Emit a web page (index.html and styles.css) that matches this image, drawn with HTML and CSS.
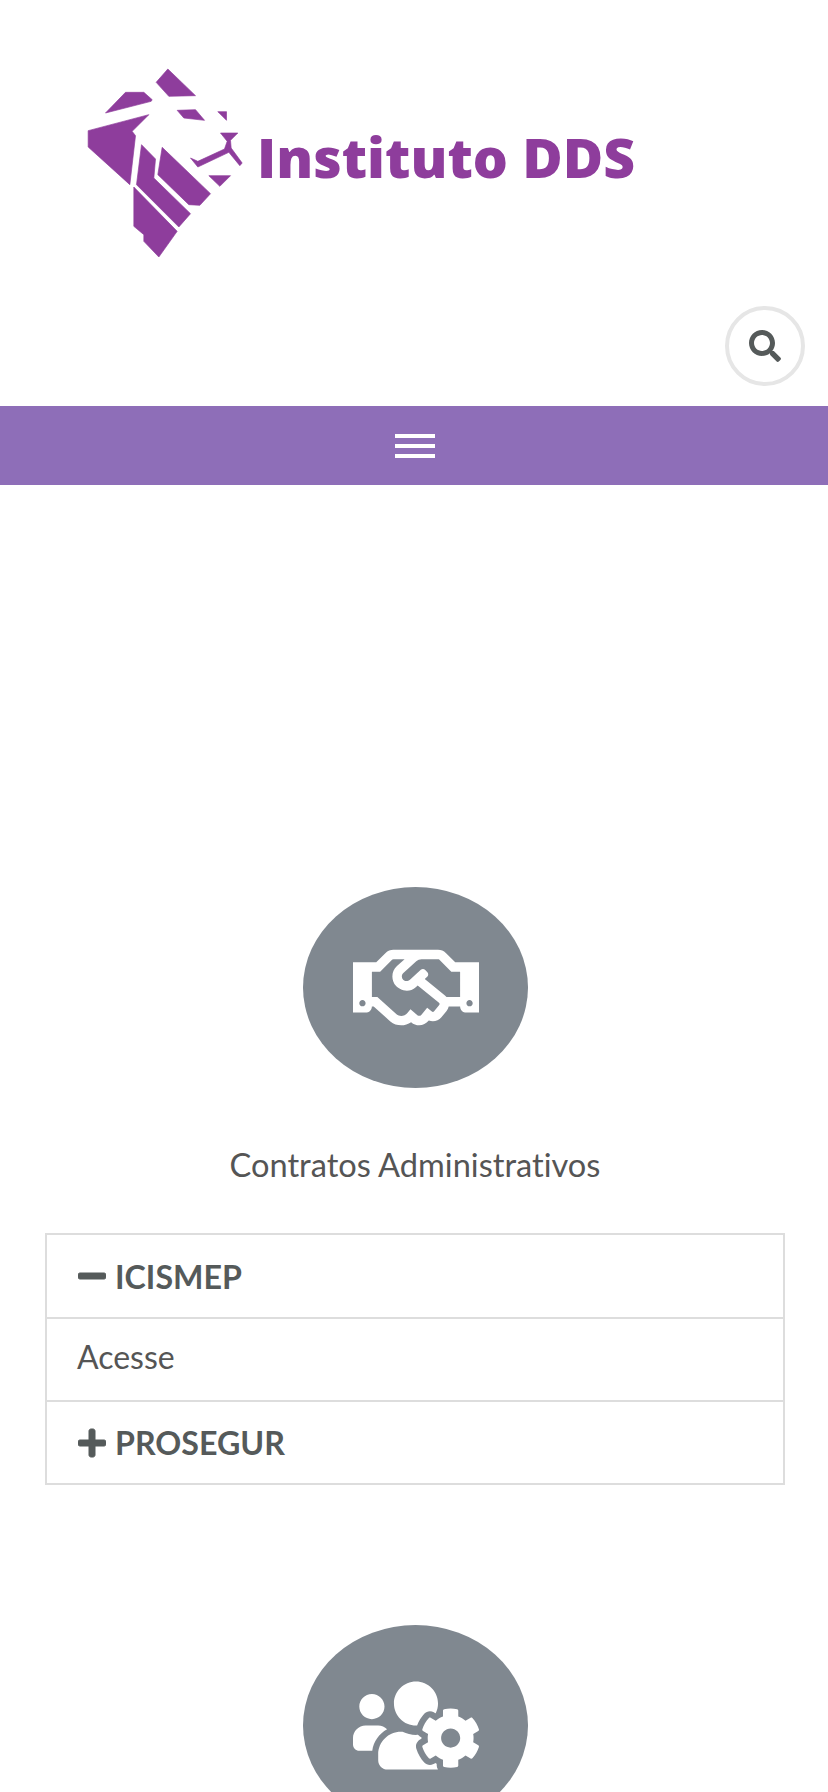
FILE: index.html
```html
<!DOCTYPE html>
<html lang="pt-br">
<head>
    <meta charset="UTF-8">
    <meta name="viewport" content="width=device-width, initial-scale=1.0">
    <title>Instituto DDS</title>
    <link rel="stylesheet" href="styles.css">
</head>
<body>
    <div class="pagina">
        <header class="topo">
            <a class="logo" href="#">
                <svg class="logo-leao" viewBox="80 55 470 570" aria-hidden="true">
                    <polygon points="322,58 405,138 325,140 287,98"/>
                    <polygon points="195,128 250,128 275,150 272,155 135,190"/>
                    <polygon points="83,243 265,195 215,245 225,258 208,405 83,292"/>
                    <polygon points="243,285 285,328 280,385 390,492 355,532 228,405"/>
                    <polygon points="305,293 450,432 418,467 385,465 292,375"/>
                    <polygon points="220,412 350,545 295,622 250,575 250,555 220,530"/>
                    <polygon points="350,182 405,180 432,212 370,205"/>
                    <polygon points="472,186 498,186 498,212"/>
                    <polygon points="480,250 532,250 510,272 512,295 545,340 538,348 505,308 412,352 390,325 412,335 492,298 500,275"/>
                    <polygon points="445,378 510,378 478,410"/>
                </svg>
                <span class="logo-texto">Instituto DDS</span>
            </a>
            <div class="busca">
                <button type="button" class="btn-busca" aria-label="Buscar">
                    <svg viewBox="0 0 512 512"><path d="M505 442.7L405.3 343c-4.5-4.5-10.6-7-17-7H372c27.6-35.3 44-79.7 44-128C416 93.1 322.9 0 208 0S0 93.1 0 208s93.1 208 208 208c48.3 0 92.7-16.4 128-44v16.3c0 6.4 2.5 12.5 7 17l99.7 99.7c9.4 9.4 24.6 9.4 33.9 0l28.3-28.3c9.4-9.4 9.4-24.6.1-34zM208 336c-70.7 0-128-57.2-128-128 0-70.7 57.2-128 128-128 70.7 0 128 57.2 128 128 0 70.7-57.2 128-128 128z"/></svg>
                </button>
            </div>
        </header>

        <nav class="menu">
            <button type="button" class="btn-menu" aria-label="Menu">
                <span></span><span></span><span></span>
            </button>
        </nav>

        <section class="bloco bloco-contratos">
            <div class="circulo">
                <svg class="icone-mao" viewBox="0 0 640 512"><path d="M519.2 127.9l-47.6-47.6A56.252 56.252 0 0 0 432 64H205.2c-14.8 0-29.1 5.9-39.6 16.3L118 127.9H0v255.7h64c17.6 0 31.8-14.2 31.9-31.7h9.1l84.6 76.4c30.9 25.1 73.8 25.7 105.6 3.8 12.5 10.8 26 15.9 41.1 15.9 18.2 0 35.3-7.4 48.8-24 22.1 8.7 48.2 2.6 64-16.8l26.2-32.3c5.6-6.9 9.1-14.8 10.9-23h57.9c.1 17.5 14.4 31.7 31.9 31.7h64V127.9H519.2zM48 351.6c-8.8 0-16-7.2-16-16s7.2-16 16-16 16 7.2 16 16c0 8.9-7.2 16-16 16zm390-6.9l-26.1 32.2c-2.8 3.4-7.8 4-11.3 1.2l-23.9-19.4-30 36.5c-6 7.3-15 4.8-18 2.4l-36.8-31.5-15.6 19.2c-13.9 17.1-39.2 19.7-55.3 6.6l-97.3-88H96V175.8h41.9l61.7-61.6c2-.8 3.7-1.5 5.7-2.3H262l-38.7 35.5c-29.4 26.9-31.1 72.3-4.4 101.3 14.8 16.2 61.2 41.2 101.5 4.4l8.2-7.5 108.2 87.8c3.4 2.8 3.9 7.9 1.2 11.3zm106-40.8h-69.2c-2.3-2.8-4.9-5.4-7.7-7.7l-102.7-83.4 12.5-11.4c6.5-6 7-16.1 1-22.6L367 167.1c-6-6.5-16.1-6.9-22.6-1l-55.2 50.6c-9.5 8.7-25.7 9.4-34.6 0-9.3-9.9-8.5-25.1 1.2-33.9l65.6-60.1c7.4-6.8 17-10.5 27-10.5l83.7-.2c2.1 0 4.1.8 5.5 2.3l61.7 61.6H544v128zm48 47.7c-8.8 0-16-7.2-16-16s7.2-16 16-16 16 7.2 16 16c0 8.9-7.2 16-16 16z"/></svg>
            </div>
            <h2 class="titulo">Contratos Administrativos</h2>
            <div class="lista">
                <div class="linha forte">
                    <svg class="sinal" viewBox="0 0 448 512"><path d="M416 208H32c-17.67 0-32 14.33-32 32v32c0 17.67 14.33 32 32 32h384c17.67 0 32-14.33 32-32v-32c0-17.67-14.33-32-32-32z"/></svg>
                    ICISMEP
                </div>
                <div class="linha linha-acesse">Acesse</div>
                <div class="linha forte">
                    <svg class="sinal" viewBox="0 0 448 512"><path d="M416 208H272V64c0-17.67-14.33-32-32-32h-32c-17.67 0-32 14.33-32 32v144H32c-17.67 0-32 14.33-32 32v32c0 17.67 14.33 32 32 32h144v144c0 17.67 14.33 32 32 32h32c17.67 0 32-14.33 32-32V304h144c17.67 0 32-14.33 32-32v-32c0-17.67-14.33-32-32-32z"/></svg>
                    PROSEGUR
                </div>
            </div>
        </section>

        <section class="bloco bloco-gestao">
            <div class="circulo">
                <svg class="icone-gestao" viewBox="0 0 640 512"><path d="M610.5 341.3c2.6-14.1 2.6-28.5 0-42.6l25.8-14.9c3-1.7 4.3-5.2 3.3-8.5-6.7-21.6-18.2-41.2-33.2-57.4-2.3-2.5-6-3.1-9-1.4l-25.8 14.9c-10.9-9.3-23.4-16.5-36.9-21.3v-29.8c0-3.4-2.4-6.4-5.7-7.1-22.3-5-45-4.8-66.2 0-3.3.7-5.7 3.7-5.7 7.1v29.8c-13.5 4.8-26 12-36.9 21.3l-25.8-14.9c-2.9-1.7-6.7-1.1-9 1.4-15 16.2-26.5 35.8-33.2 57.4-1 3.3.4 6.8 3.3 8.5l25.8 14.9c-2.6 14.1-2.6 28.5 0 42.6l-25.8 14.9c-3 1.7-4.3 5.2-3.3 8.5 6.7 21.6 18.2 41.1 33.2 57.4 2.3 2.5 6 3.1 9 1.4l25.8-14.9c10.9 9.3 23.4 16.5 36.9 21.3v29.8c0 3.4 2.4 6.4 5.7 7.1 22.3 5 45 4.8 66.2 0 3.3-.7 5.7-3.7 5.7-7.1v-29.8c13.5-4.8 26-12 36.9-21.3l25.8 14.9c2.9 1.7 6.7 1.1 9-1.4 15-16.2 26.5-35.8 33.2-57.4 1-3.3-.4-6.8-3.3-8.5l-25.8-14.9zM496 368.5c-26.8 0-48.5-21.8-48.5-48.5s21.8-48.5 48.5-48.5 48.5 21.8 48.5 48.5-21.7 48.5-48.5 48.5zM96 224c35.3 0 64-28.7 64-64s-28.7-64-64-64-64 28.7-64 64 28.7 64 64 64zm224 32c1.9 0 3.7-.5 5.6-.6 8.3-21.7 20.5-42.1 36.3-59.2 7.4-8 17.9-12.6 28.9-12.6 6.9 0 13.7 1.8 19.6 5.3l7.9 4.6c.8-.5 1.6-.9 2.4-1.4 7-14.6 11.2-30.8 11.2-48 0-61.9-50.1-112-112-112S208 82.1 208 144c0 61.9 50.1 112 112 112zm105.2 194.5c-2.3-1.2-4.6-2.6-6.8-3.9-8.2 4.8-15.3 9.8-27.5 9.8-10.9 0-21.4-4.6-28.9-12.6-18.3-19.8-32.3-43.9-40.2-69.6-10.7-34.5 24.9-49.7 25.8-50.3-.1-2.6-.1-5.2 0-7.8l-7.9-4.6c-3.8-2.2-7-5-9.8-8.1-3.3.2-6.5.6-9.8.6-24.6 0-47.6-6-68.5-16h-8.3C179.6 288 128 339.6 128 403.2V432c0 26.5 21.5 48 48 48h255.4c-3.7-6-6.2-12.8-6.2-20.3v-9.2zM173.1 274.6C161.5 263.1 145.6 256 128 256H64c-35.3 0-64 28.7-64 64v32c0 17.7 14.3 32 32 32h65.9c6.3-47.4 34.9-87.3 75.2-109.4z"/></svg>
            </div>
        </section>
    </div>
</body>
</html>
```

FILE: styles.css
```css
html, body {
    margin: 0;
    padding: 0;
    background: #fff;
}
.pagina {
    height: 1792px;
    overflow: hidden;
    font-family: Lato, Arial, sans-serif;
    color: #555;
}
.topo {
    padding-top: 68px;
}
.logo {
    display: flex;
    align-items: flex-start;
    gap: 13px;
    padding-left: 87px;
    text-decoration: none;
}
.logo-leao {
    width: 157px;
    height: 190px;
    fill: #8e3d9c;
    stroke: #8e3d9c;
    stroke-width: 2;
}
.logo-texto {
    margin-top: 52px;
    font-family: "Open Sans", Arial, sans-serif;
    font-weight: 800;
    font-size: 55.2px;
    line-height: 74px;
    color: #8e3d9c;
    white-space: nowrap;
}
.busca {
    display: flex;
    justify-content: flex-end;
    padding: 48px 23px 20px 0;
}
.btn-busca {
    display: flex;
    align-items: center;
    justify-content: center;
    width: 80px;
    height: 80px;
    padding: 0;
    border: 4px solid #e6e6e6;
    border-radius: 50%;
    background: #fff;
}
.btn-busca svg {
    width: 32px;
    height: 32px;
    fill: #555a5a;
}
.menu {
    display: flex;
    justify-content: center;
    align-items: center;
    height: 79px;
    padding-left: 2px;
    background: #8e6eb8;
}
.btn-menu {
    display: flex;
    flex-direction: column;
    gap: 6px;
    width: 40px;
    padding: 0;
    border: none;
    background: none;
}
.btn-menu span {
    height: 4px;
    background: #fff;
}
.bloco {
    display: flex;
    flex-direction: column;
    align-items: center;
    padding-left: 2px;
}
.bloco-contratos {
    padding-top: 402px;
}
.bloco-gestao {
    padding-top: 140px;
}
.circulo {
    display: flex;
    align-items: center;
    justify-content: center;
    flex-shrink: 0;
    width: 225px;
    height: 201px;
    border-radius: 50%;
    background: #808890;
}
.circulo svg {
    width: 126px;
    height: 101px;
    margin-left: 2px;
    fill: #fff;
}
.titulo {
    margin: 57px 0 48px;
    font-weight: 400;
    font-size: 32.6px;
    line-height: 40px;
    font-variant-ligatures: none;
}
.lista {
    box-sizing: border-box;
    width: 740px;
    border: 2px solid #ddd;
}
.linha {
    display: flex;
    align-items: center;
    gap: 9px;
    box-sizing: border-box;
    height: 82px;
    padding-left: 31px;
    font-size: 32px;
}
.linha + .linha {
    box-sizing: content-box;
    height: 81px;
    border-top: 2px solid #ddd;
}
.linha + .linha-acesse {
    height: 74px;
    padding-bottom: 7px;
    padding-left: 30px;
}
.forte {
    font-weight: 700;
    font-size: 32.2px;
    color: #555a5a;
}
.sinal {
    width: 28px;
    height: 32px;
    fill: #555a5a;
    stroke: #555a5a;
    stroke-width: 16;
}
```
